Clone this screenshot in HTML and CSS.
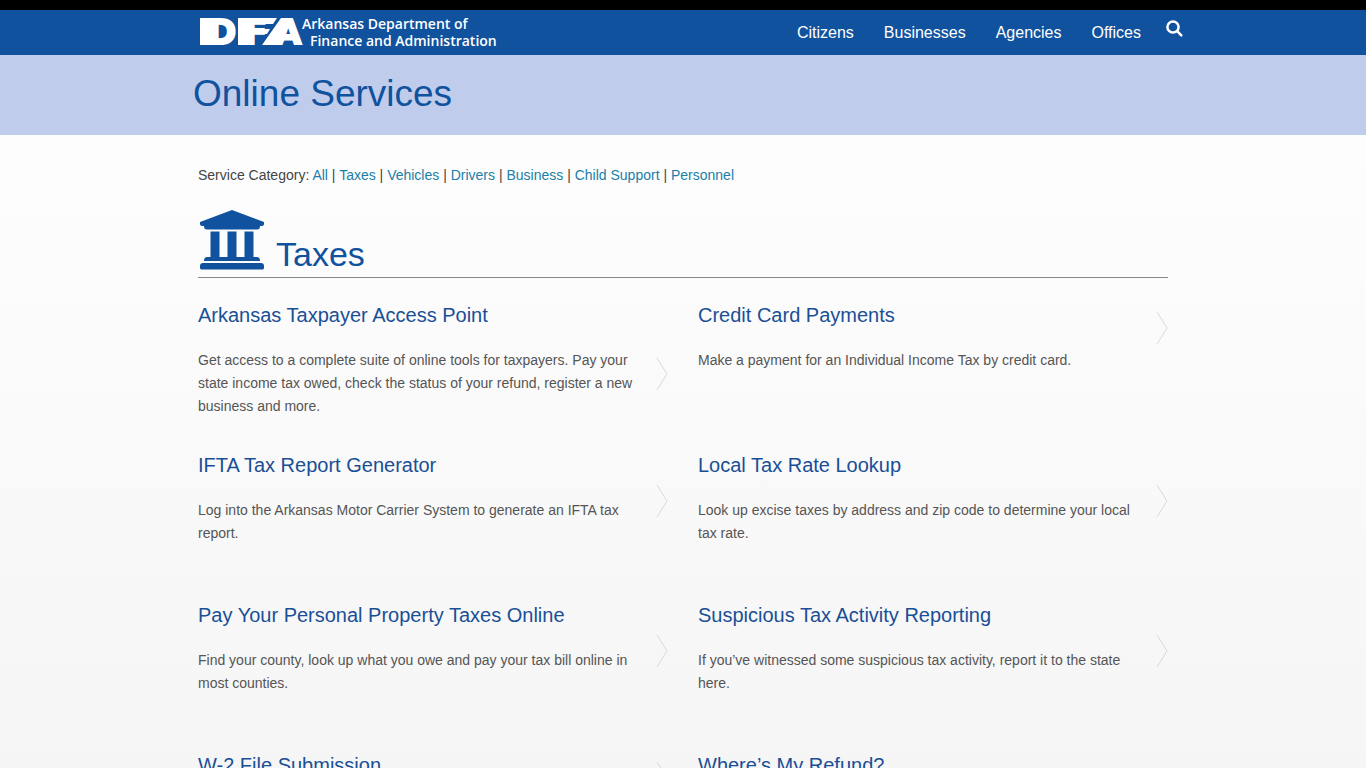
FILE: index.html
```html
<!DOCTYPE html>
<html lang="en">
<head>
<meta charset="utf-8">
<meta name="viewport" content="width=device-width, initial-scale=1">
<title>Online Services - Arkansas Department of Finance and Administration</title>
<link rel="stylesheet" href="styles.css">
</head>
<body>
<header class="topbar">
  <div class="topbar-inner">
    <a class="brand" href="#" aria-label="Arkansas Department of Finance and Administration">
      <svg class="brand-mark" width="104" height="45" viewBox="0 0 104 45" aria-hidden="true">
        <rect class="brand-bar" x="0" y="8" width="12" height="27"/>
        <text x="8" y="34">D</text>
        <rect class="brand-bar" x="38" y="8" width="12" height="27"/>
        <text x="44" y="34">F</text>
        <path class="brand-bar" d="M8 8H20V14H8ZM8 29H20V35H8ZM60 8H77L73 14H60ZM60 19H70L67 24H60Z"/>
        <text x="75" y="34">A</text>
        <path class="brand-bar" d="M81 8H92L74 35H62Z"/>
      </svg>
      <span class="brand-name"><span>Arkansas Department of</span><span class="brand-second">Finance and Administration</span></span>
    </a>
    <nav class="nav" aria-label="Main">
      <a href="#">Citizens</a>
      <a href="#">Businesses</a>
      <a href="#">Agencies</a>
      <a href="#">Offices</a>
      <button class="search" type="button" aria-label="Search">
        <svg width="17" height="17" viewBox="0 0 17 17" aria-hidden="true"><circle cx="7" cy="7" r="5.6"/><path d="M11.2 11.2L15.3 15.3"/></svg>
      </button>
    </nav>
  </div>
</header>
<div class="banner"><h1>Online Services</h1></div>
<main class="content">
  <p class="categories">Service Category: <a href="#">All</a> | <a href="#">Taxes</a> | <a href="#">Vehicles</a> | <a href="#">Drivers</a> | <a href="#">Business</a> | <a href="#">Child Support</a> | <a href="#">Personnel</a></p>
  <h2 class="section-title">
    <svg width="64" height="60" viewBox="0 0 64 60" aria-hidden="true"><path d="M32 0L64 12V14Q64 16 62 16H60Q60 19.5 57 19.5H7Q4 19.5 4 16H2Q0 16 0 14V12ZM10.500 21.500H19.500V47H27.500V21.500H36.500V47H44.500V21.500H53.500V47H57Q60 47 60 51H4Q4 47 7 47H10.500ZM3 53H61Q64 53 64 56V58Q64 59.500 62 59.500H2Q0 59.500 0 58V56Q0 53 3 53Z"/></svg>
    Taxes
  </h2>
  <div class="services">
    <a class="service" href="#"><h3>Arkansas Taxpayer Access Point</h3><p>Get access to a complete suite of online tools for taxpayers. Pay your state income tax owed, check the status of your refund, register a new business and more.</p><svg class="arrow" width="12" height="34" viewBox="0 0 12 34" aria-hidden="true"><path d="M1 1L11 17L1 33"/></svg></a>
    <a class="service" href="#"><h3>Credit Card Payments</h3><p>Make a payment for an Individual Income Tax by credit card.</p><svg class="arrow" width="12" height="34" viewBox="0 0 12 34" aria-hidden="true"><path d="M1 1L11 17L1 33"/></svg></a>
    <a class="service" href="#"><h3>IFTA Tax Report Generator</h3><p>Log into the Arkansas Motor Carrier System to generate an IFTA tax report.</p><svg class="arrow" width="12" height="34" viewBox="0 0 12 34" aria-hidden="true"><path d="M1 1L11 17L1 33"/></svg></a>
    <a class="service" href="#"><h3>Local Tax Rate Lookup</h3><p>Look up excise taxes by address and zip code to determine your local tax rate.</p><svg class="arrow" width="12" height="34" viewBox="0 0 12 34" aria-hidden="true"><path d="M1 1L11 17L1 33"/></svg></a>
    <a class="service" href="#"><h3>Pay Your Personal Property Taxes Online</h3><p>Find your county, look up what you owe and pay your tax bill online in most counties.</p><svg class="arrow" width="12" height="34" viewBox="0 0 12 34" aria-hidden="true"><path d="M1 1L11 17L1 33"/></svg></a>
    <a class="service" href="#"><h3>Suspicious Tax Activity Reporting</h3><p>If you’ve witnessed some suspicious tax activity, report it to the state here.</p><svg class="arrow" width="12" height="34" viewBox="0 0 12 34" aria-hidden="true"><path d="M1 1L11 17L1 33"/></svg></a>
    <a class="service" href="#"><h3>W-2 File Submission</h3><svg class="arrow" width="12" height="34" viewBox="0 0 12 34" aria-hidden="true"><path d="M1 1L11 17L1 33"/></svg></a>
    <a class="service" href="#"><h3>Where’s My Refund?</h3></a>
  </div>
</main>
</body>
</html>
```
FILE: styles.css
```css
* { box-sizing: border-box; }
body {
  margin: 0;
  font-family: "Liberation Sans", Arial, sans-serif;
  font-size: 14px;
  color: #444;
  background: linear-gradient(#fff, #f3f3f3 960px);
}
a { color: #1b7fa8; text-decoration: none; }
h1, h2, h3 { font-weight: 400; color: #10529e; }

.topbar { background: #10529e; border-top: 10px solid #000; }
.topbar-inner {
  max-width: 1000px;
  margin: 0 auto;
  min-height: 45px;
  display: flex;
  justify-content: space-between;
  align-items: center;
}
.brand { display: flex; align-items: center; padding-left: 17px; color: #fff; }
.brand-mark text {
  font: 700 34px "DejaVu Sans", sans-serif;
  fill: #fff;
  stroke: #fff;
  stroke-width: 2px;
}
.brand-bar { fill: #fff; }
.brand-name {
  display: flex;
  flex-direction: column;
  margin: 0 0 2px -2px;
  font: 600 14px/17px "Open Sans", sans-serif;
  white-space: nowrap;
}
.brand-second { padding-left: 8px; }
.nav { display: flex; align-items: center; gap: 30px; font-size: 16px; }
.nav a { color: #fff; }
.search {
  display: flex;
  margin: 0 0 8px -5px;
  padding: 0;
  border: 0;
  background: none;
}
.search svg { fill: none; stroke: #fff; stroke-width: 2.500; stroke-linecap: round; }

.banner { background: #bfccec; }
.banner h1 {
  max-width: 980px;
  margin: 0 auto;
  padding: 17px 0 19px;
  font-size: 37px;
  line-height: 44px;
}

.content { max-width: 970px; margin: 0 auto; padding: 30px 0; }
.categories { margin: 0 0 25px; line-height: 20px; }
.section-title {
  display: flex;
  align-items: flex-end;
  gap: 12px;
  margin: 0;
  padding: 0 2px 7px;
  border-bottom: 1px solid #888;
  font-size: 34px;
  line-height: 32px;
}
.section-title svg { fill: #10529e; }
.services {
  display: grid;
  grid-template-columns: 1fr 1fr;
  grid-auto-rows: minmax(150px, auto);
  column-gap: 30px;
  padding-top: 25px;
}
.service {
  display: grid;
  grid-template-columns: 1fr 12px;
  grid-template-rows: auto 1fr;
  column-gap: 10px;
  align-self: start;
  min-height: 69px;
  color: #555;
}
.service h3 { margin: 0 0 22px; font-size: 20px; line-height: 24px; color: #1a4f96; }
.service p { grid-row: 2; margin: 0; line-height: 23px; }
.arrow {
  grid-column: 2;
  grid-row: 1 / 3;
  align-self: end;
  margin-bottom: 27px;
  fill: none;
  stroke: #d9d9d9;
}
```
